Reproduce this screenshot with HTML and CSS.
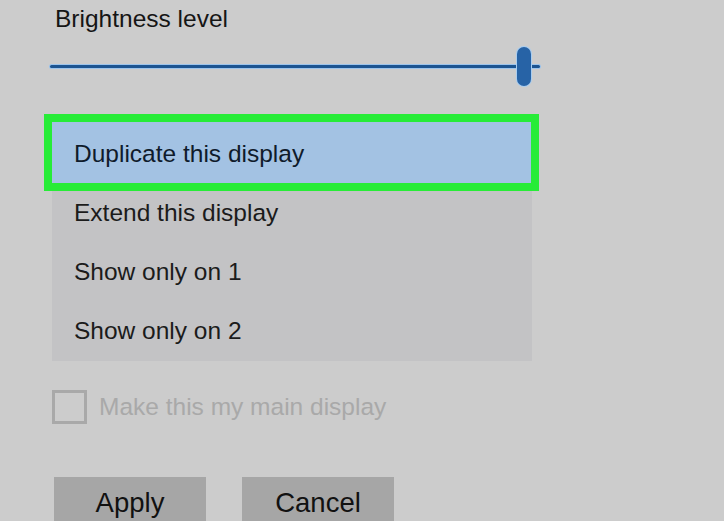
FILE: index.html
```html
<!DOCTYPE html>
<html>
<head>
<meta charset="utf-8">
<link rel="stylesheet" href="styles.css">
</head>
<body>
<div class="panel">
  <div class="title">Brightness level</div>
  <div class="slider">
    <div class="track"></div>
    <div class="thumb"></div>
  </div>
  <div class="list">
    <div class="item selected">Duplicate this display</div>
    <div class="item">Extend this display</div>
    <div class="item">Show only on 1</div>
    <div class="item">Show only on 2</div>
  </div>
  <div class="check-row">
    <span class="checkbox"></span>
    <span class="check-label">Make this my main display</span>
  </div>
  <div class="buttons">
    <div class="btn">Apply</div>
    <div class="btn">Cancel</div>
  </div>
</div>
</body>
</html>
```
FILE: styles.css
```css
html, body {
  margin: 0;
  padding: 0;
  background: #cccccc;
  overflow: hidden;
}
.panel {
  font-family: "Liberation Sans", Arial, sans-serif;
  font-size: 24.5px;
  color: #151515;
  padding-top: 5px;
}
.title {
  margin-left: 55px;
  line-height: 28px;
}
.slider {
  position: relative;
  margin: 14px 0 0 50px;
  width: 490px;
  height: 39px;
}
.track {
  position: absolute;
  left: 0;
  right: 0;
  top: 18px;
  height: 3px;
  background: #1c5491;
  border-radius: 2px;
  box-shadow: 0 0 0 1px #9cc4ec;
}
.thumb {
  position: absolute;
  left: 467px;
  top: 0;
  width: 14px;
  height: 39px;
  border-radius: 7px;
  background: #2763a6;
  box-shadow: 0 0 0 1px #a8cdf0;
}
.list {
  margin: 36px 0 0 52px;
  width: 480px;
  background: #c3c3c5;
  padding-bottom: 1px;
}
.item {
  height: 59px;
  line-height: 58px;
  padding-top: 1px;
  box-sizing: border-box;
  padding-left: 22px;
  color: #1b1b1b;
}
.item.selected {
  height: 61px;
  line-height: 59px;
  padding-top: 2px;
  width: 479px;
  background: #a3c2e3;
  color: #0f1b2b;
  outline: 8px solid #27ec37;
}
.check-row {
  display: flex;
  align-items: center;
  margin: 29px 0 0 52px;
  height: 34px;
}
.checkbox {
  width: 35px;
  height: 34px;
  box-sizing: border-box;
  border: 3px solid #a9a9a9;
}
.check-label {
  margin-left: 12px;
  line-height: 28px;
  color: #a9a9a9;
}
.buttons {
  display: flex;
  gap: 36px;
  margin: 53px 0 0 54px;
}
.btn {
  width: 152px;
  height: 55px;
  box-sizing: border-box;
  padding-top: 10px;
  background: #a6a6a6;
  text-align: center;
  font-size: 27.5px;
  line-height: 31px;
  color: #111;
}
```
